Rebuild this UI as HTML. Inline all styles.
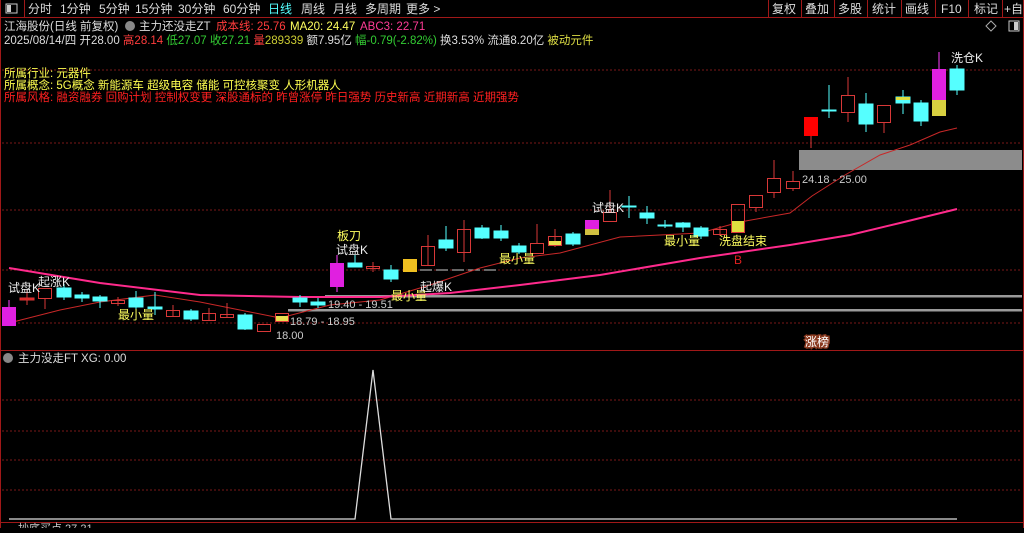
<!DOCTYPE html>
<html><head><meta charset="utf-8"><style>
body{margin:0;background:#000;width:1024px;height:528px;overflow:hidden;font-family:"Liberation Sans","Noto Sans CJK SC",sans-serif}
svg text{font-family:"Liberation Sans","Noto Sans CJK SC",sans-serif}
</style></head><body>
<svg width="1024" height="528" viewBox="0 0 1024 528" xmlns="http://www.w3.org/2000/svg">
<rect width="1024" height="528" fill="#000"/>
<!-- top bar -->
<line x1="0" y1="17.5" x2="1024" y2="17.5" stroke="#a01818"/>
<line x1="0.5" y1="0" x2="0.5" y2="528" stroke="#a01818"/>
<line x1="1023.5" y1="0" x2="1023.5" y2="528" stroke="#a01818"/>
<line x1="24.5" y1="0" x2="24.5" y2="17" stroke="#a01818"/>
<rect x="6" y="4" width="11" height="9" fill="none" stroke="#ccc"/><rect x="7" y="5" width="4" height="7" fill="#ccc"/>
<g font-size="12" fill="#ddd">
<text x="28" y="13">分时</text><text x="60" y="13">1分钟</text><text x="99" y="13">5分钟</text><text x="135" y="13">15分钟</text><text x="178" y="13">30分钟</text><text x="223" y="13">60分钟</text>
<text x="268" y="13" fill="#5ff">日线</text><text x="301" y="13">周线</text><text x="333" y="13">月线</text><text x="365" y="13">多周期</text><text x="406" y="13">更多 &gt;</text>
</g>
<g stroke="#a01818"><line x1="768.5" y1="0" x2="768.5" y2="17"/><line x1="801.5" y1="0" x2="801.5" y2="17"/><line x1="834.5" y1="0" x2="834.5" y2="17"/><line x1="867.5" y1="0" x2="867.5" y2="17"/><line x1="901.5" y1="0" x2="901.5" y2="17"/><line x1="935.5" y1="0" x2="935.5" y2="17"/><line x1="968.5" y1="0" x2="968.5" y2="17"/><line x1="1002.5" y1="0" x2="1002.5" y2="17"/></g>
<g font-size="12" fill="#ddd"><text x="772" y="13">复权</text><text x="805" y="13">叠加</text><text x="838" y="13">多股</text><text x="872" y="13">统计</text><text x="905" y="13">画线</text><text x="941" y="13">F10</text><text x="974" y="13">标记</text><text x="1004" y="13">+自</text></g>
<!-- info rows -->
<g font-size="11.5">
<text x="4" y="30" fill="#ddd">江海股份(日线 前复权)</text>
<circle cx="130" cy="26" r="5" fill="#888"/>
<text x="139" y="30" fill="#ddd">主力还没走ZT</text>
<text x="216" y="30" fill="#ff3c3c">成本线: 25.76</text>
<text x="290" y="30" fill="#ffff60">MA20: 24.47</text>
<text x="360" y="30" fill="#ff3c96">ABC3: 22.71</text>
<text x="4" y="44" fill="#ddd">2025/08/14/四 开28.00 <tspan fill="#ff3c3c">高28.14</tspan> <tspan fill="#3c3">低27.07 收27.21</tspan> <tspan fill="#ff3c3c">量</tspan><tspan fill="#cc3">289339</tspan> 额7.95亿 <tspan fill="#3c3">幅-0.79(-2.82%)</tspan> 换3.53% 流通8.20亿 <tspan fill="#dd4">被动元件</tspan></text>
<text x="4" y="77" fill="#ffff50">所属行业: 元器件</text>
<text x="4" y="89" fill="#ffff50">所属概念: 5G概念 新能源车 超级电容 储能 可控核聚变 人形机器人</text>
<text x="4" y="101" fill="#ff2020">所属风格: 融资融券 回购计划 控制权变更 深股通标的 昨曾涨停 昨日强势 历史新高 近期新高 近期强势</text>
</g>
<path d="M986 26l5-5 5 5-5 5z" fill="none" stroke="#aaa"/>
<rect x="1009" y="21" width="10" height="10" fill="none" stroke="#ccc"/><rect x="1014" y="22" width="4" height="8" fill="#ccc"/>
<!-- grid -->
<g stroke="#7a1818" stroke-dasharray="2 2">
<line x1="2" y1="70" x2="1022" y2="70"/><line x1="2" y1="143" x2="1022" y2="143"/><line x1="2" y1="210" x2="1022" y2="210"/><line x1="2" y1="270" x2="1022" y2="270"/><line x1="2" y1="323" x2="1022" y2="323"/>
<line x1="2" y1="400" x2="1022" y2="400"/><line x1="2" y1="431" x2="1022" y2="431"/><line x1="2" y1="460" x2="1022" y2="460"/><line x1="2" y1="490" x2="1022" y2="490"/>
</g>
<!-- gray zones -->
<rect x="799" y="150" width="223" height="20" fill="#8c8c8c"/>
<rect x="325" y="295" width="697" height="2.5" fill="#9a9a9a"/>
<rect x="288" y="309" width="734" height="2.5" fill="#9a9a9a"/>
<line x1="420" y1="270" x2="500" y2="270" stroke="#ccc" stroke-dasharray="12 4"/>
<!-- MA lines -->
<polyline fill="none" stroke="#c82828" stroke-width="1" points="9,323 60,310 100,302 155,295 200,302 230,308 280,318 330,305 380,300 430,285 480,268 520,258 560,253 620,237 660,235 700,233 740,222 790,213 812,196 845,175 880,155 910,145 940,132 957,128"/>
<polyline fill="none" stroke="#ff2a8c" stroke-width="2" points="9,268 100,283 200,295 300,297 380,297 450,293 520,285 600,275 700,258 790,245 850,235 900,223 957,209"/>
<!-- candles -->
<g stroke-width="1">
<!-- cyan solid -->
<g fill="#55ffff" stroke="#55ffff">
<rect x="57" y="288" width="14" height="9"/><line x1="64" y1="284" x2="64" y2="300"/>
<rect x="75" y="295" width="14" height="3"/><line x1="82" y1="292" x2="82" y2="302"/>
<rect x="93" y="297" width="14" height="4"/><line x1="100" y1="295" x2="100" y2="308"/>
<rect x="129" y="298" width="14" height="9"/><line x1="136" y1="291" x2="136" y2="310"/>
<rect x="148" y="307" width="14" height="2"/><line x1="155" y1="292" x2="155" y2="315"/>
<rect x="184" y="311" width="14" height="8"/><line x1="191" y1="309" x2="191" y2="321"/>
<rect x="238" y="315" width="14" height="14"/><line x1="245" y1="313" x2="245" y2="330"/>
<rect x="293" y="298" width="14" height="4"/><line x1="300" y1="295" x2="300" y2="307"/>
<rect x="311" y="302" width="14" height="3"/><line x1="318" y1="298" x2="318" y2="308"/>
<rect x="348" y="263" width="14" height="4"/><line x1="355" y1="255" x2="355" y2="267"/>
<rect x="384" y="270" width="14" height="9"/><line x1="391" y1="265" x2="391" y2="282"/>
<rect x="439" y="240" width="14" height="8"/><line x1="446" y1="226" x2="446" y2="251"/>
<rect x="475" y="228" width="14" height="10"/><line x1="482" y1="225" x2="482" y2="239"/>
<rect x="494" y="231" width="14" height="7"/><line x1="501" y1="225" x2="501" y2="241"/>
<rect x="512" y="246" width="14" height="6"/><line x1="519" y1="243" x2="519" y2="254"/>
<rect x="566" y="234" width="14" height="10"/><line x1="573" y1="232" x2="573" y2="246"/>
<rect x="622" y="206" width="14" height="1"/><line x1="629" y1="196" x2="629" y2="218"/>
<rect x="640" y="213" width="14" height="5"/><line x1="647" y1="206" x2="647" y2="224"/>
<rect x="658" y="225" width="14" height="1"/><line x1="665" y1="220" x2="665" y2="228"/>
<rect x="676" y="223" width="14" height="4"/><line x1="683" y1="222" x2="683" y2="232"/>
<rect x="694" y="228" width="14" height="8"/><line x1="701" y1="226" x2="701" y2="239"/>
<rect x="822" y="110" width="14" height="1"/><line x1="829" y1="85" x2="829" y2="118"/>
<rect x="859" y="104" width="14" height="20"/><line x1="866" y1="93" x2="866" y2="132"/>
<rect x="896" y="97" width="14" height="6"/><line x1="903" y1="90" x2="903" y2="114"/>
<rect x="914" y="103" width="14" height="18"/><line x1="921" y1="100" x2="921" y2="126"/>
<rect x="950" y="69" width="14" height="21"/><line x1="957" y1="65" x2="957" y2="95"/>
</g>
<!-- red hollow -->
<g fill="none" stroke="#d83838">
<line x1="27" y1="290" x2="27" y2="305"/><rect x="20" y="298" width="14" height="2" fill="#e02020"/>
<rect x="38.5" y="288.5" width="13" height="10"/><line x1="45" y1="299" x2="45" y2="309"/>
<rect x="111.5" y="300.5" width="13" height="3"/><line x1="118" y1="297" x2="118" y2="306"/>
<rect x="166.5" y="310.5" width="13" height="6"/><line x1="173" y1="305" x2="173" y2="317"/>
<rect x="202.5" y="313.5" width="13" height="7"/><line x1="209" y1="308" x2="209" y2="321"/>
<rect x="220.5" y="314.5" width="13" height="3"/><line x1="227" y1="303" x2="227" y2="318"/>
<rect x="257.5" y="324.5" width="13" height="7"/>
<rect x="275.5" y="313.5" width="13" height="8"/>
<rect x="366.5" y="266.5" width="13" height="2"/><line x1="373" y1="262" x2="373" y2="272"/>
<rect x="421.5" y="246.5" width="13" height="19"/><line x1="428" y1="235" x2="428" y2="265"/>
<rect x="457.5" y="229.5" width="13" height="23"/><line x1="464" y1="220" x2="464" y2="262"/>
<rect x="530.5" y="243.5" width="13" height="10"/><line x1="537" y1="224" x2="537" y2="243"/>
<rect x="548.5" y="236.5" width="13" height="9"/><line x1="555" y1="229" x2="555" y2="247"/>
<rect x="603.5" y="212.5" width="13" height="9"/><line x1="610" y1="190" x2="610" y2="212"/>
<rect x="713.5" y="229.5" width="13" height="5"/><line x1="720" y1="226" x2="720" y2="236"/>
<rect x="731.5" y="204.5" width="13" height="28"/>
<rect x="749.5" y="195.5" width="13" height="12"/><line x1="756" y1="208" x2="756" y2="212"/>
<rect x="767.5" y="178.5" width="13" height="14"/><line x1="774" y1="160" x2="774" y2="178"/><line x1="774" y1="193" x2="774" y2="198"/>
<rect x="786.5" y="181.5" width="13" height="7"/><line x1="793" y1="171" x2="793" y2="181"/><line x1="793" y1="189" x2="793" y2="191"/>
<rect x="841.5" y="95.5" width="13" height="17"/><line x1="848" y1="77" x2="848" y2="95"/><line x1="848" y1="113" x2="848" y2="122"/>
<rect x="877.5" y="105.5" width="13" height="17"/><line x1="884" y1="123" x2="884" y2="133"/>
</g>
<rect x="804" y="117" width="14" height="19" fill="#ff0000"/><line x1="811" y1="136" x2="811" y2="148" stroke="#d83838"/>
<!-- magenta -->
<line x1="9" y1="300" x2="9" y2="307" stroke="#ff40ff"/><rect x="2" y="307" width="14" height="19" fill="#e020e0"/>
<line x1="337" y1="255" x2="337" y2="292" stroke="#ff40ff"/><rect x="330" y="263" width="14" height="24" fill="#e020e0"/>
<rect x="585" y="220" width="14" height="9" fill="#e020e0"/><rect x="585" y="229" width="14" height="6" fill="#d0c040"/>
<line x1="939" y1="52" x2="939" y2="69" stroke="#ff40ff"/><rect x="932" y="69" width="14" height="31" fill="#e020e0"/><rect x="932" y="100" width="14" height="16" fill="#d8d040"/>
<!-- yellow -->
<rect x="276" y="316" width="12" height="5" fill="#e8e050"/>
<rect x="403" y="259" width="14" height="13" fill="#f0c020"/>
<rect x="549" y="241" width="12" height="4" fill="#e8e050"/>
<rect x="732" y="221" width="12" height="11" fill="#e0e040"/>
<rect x="896" y="97" width="14" height="3" fill="#e0e040"/>
</g>
<!-- labels -->
<g font-size="12">
<text x="8" y="292" fill="#eee">试盘K</text><text x="38" y="286" fill="#eee">起涨K</text>
<text x="118" y="319" fill="#ffff60">最小量</text>
<text x="337" y="240" fill="#ffff60">板刀</text><text x="336" y="254" fill="#eee">试盘K</text>
<text x="391" y="300" fill="#ffff60">最小量</text>
<text x="420" y="291" fill="#eee">起爆K</text>
<text x="499" y="263" fill="#ffff60">最小量</text>
<text x="592" y="212" fill="#eee">试盘K</text>
<text x="664" y="245" fill="#ffff60">最小量</text>
<text x="719" y="245" fill="#ffff60">洗盘结束</text>
<text x="734" y="264" fill="#e02020">B</text>
<text x="951" y="62" fill="#eee">洗仓K</text>
<text x="805" y="346" fill="#fff" style="paint-order:stroke" stroke="#8a3a20" stroke-width="3">涨榜</text>
</g>
<g font-size="11" fill="#ccc">
<text x="328" y="308">19.40 - 19.51</text>
<text x="290" y="325">18.79 - 18.95</text>
<text x="276" y="339">18.00</text>
<text x="802" y="183">24.18 - 25.00</text>
</g>
<!-- lower panel -->
<line x1="0" y1="350.5" x2="1024" y2="350.5" stroke="#a01818"/>
<circle cx="8" cy="358" r="5" fill="#888"/>
<text x="18" y="362" font-size="11.5" fill="#ddd">主力没走FT XG: 0.00</text>
<polyline fill="none" stroke="#ddd" stroke-width="1.3" points="9,519 355,519 373,370 391,519 957,519"/>
<line x1="0" y1="522.5" x2="1024" y2="522.5" stroke="#a01818"/>
<text x="18" y="532" font-size="11" fill="#ccc">抄底买点 27.21</text>
</svg>
</body></html>
